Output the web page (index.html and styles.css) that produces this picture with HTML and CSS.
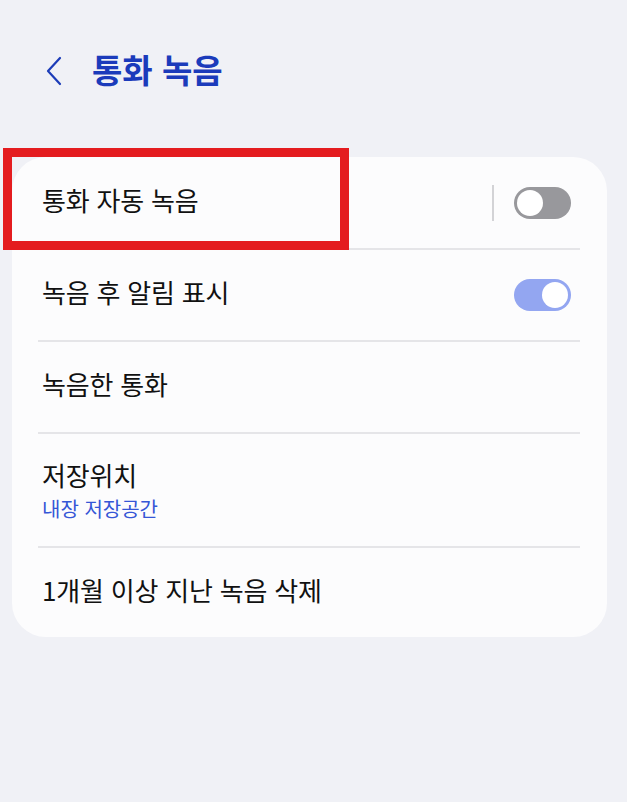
FILE: index.html
```html
<!DOCTYPE html>
<html lang="ko">
<head>
<meta charset="utf-8">
<link rel="stylesheet" href="styles.css">
</head>
<body>
<div class="page">
  <header class="header">
    <svg class="back" viewBox="0 0 18 30" width="18" height="30"><path d="M15 2 L3 15 L15 28" fill="none" stroke="#1c3cb8" stroke-width="2.2" stroke-linecap="round" stroke-linejoin="round"/></svg>
    <h1 class="title">통화 녹음</h1>
  </header>
  <section class="card">
    <div class="row r1">
      <span class="label">통화 자동 녹음</span>
      <span class="vsep"></span>
      <span class="toggle off"><span class="knob"></span></span>
    </div>
    <div class="divider"></div>
    <div class="row r2">
      <span class="label">녹음 후 알림 표시</span>
      <span class="toggle on"><span class="knob"></span></span>
    </div>
    <div class="divider"></div>
    <div class="row r3">
      <span class="label">녹음한 통화</span>
    </div>
    <div class="divider"></div>
    <div class="row r4">
      <div class="stack">
        <span class="label">저장위치</span>
        <span class="sub">내장 저장공간</span>
      </div>
    </div>
    <div class="divider"></div>
    <div class="row r5">
      <span class="label">1개월 이상 지난 녹음 삭제</span>
    </div>
  </section>
  <div class="highlight"></div>
</div>
</body>
</html>
```
FILE: styles.css
```css
html, body {
  margin: 0;
  padding: 0;
  background: #f0f1f6;
}
body {
  font-family: "Noto Sans CJK KR", "Noto Sans", sans-serif;
  width: 627px;
  height: 802px;
  overflow: hidden;
}
.page {
  position: relative;
  padding: 0 20px 0 12px;
}
.header {
  display: flex;
  align-items: center;
  height: 141px;
  padding-left: 33px;
  box-sizing: border-box;
}
.back {
  display: block;
  margin-top: 0;
}
.title {
  margin: 0 0 0 29px;
  font-size: 33px;
  line-height: 40px;
  font-weight: 700;
  color: #1b3bbb;
  letter-spacing: 0;
  position: relative;
  top: -2px;
}
.card {
  margin-top: 16px;
  background: #fcfcfd;
  border-radius: 34px;
  width: 595px;
  box-sizing: border-box;
  padding: 0 27px 0 26px;
}
.row {
  display: flex;
  align-items: center;
  padding-left: 4px;
  padding-right: 9px;
}
.r1 { height: 91px; }
.r2 { height: 90px; }
.r3 { height: 90px; }
.r4 { height: 112px; }
.r5 { height: 89px; }
.label {
  font-size: 26px;
  line-height: 34px;
  color: #111;
  flex: 1;
  letter-spacing: -0.2px;
  position: relative;
  top: -3px;
}
.stack {
  display: flex;
  flex-direction: column;
}
.stack .label {
  top: 0;
}
.sub {
  font-size: 20px;
  line-height: 26px;
  color: #3556d6;
  margin-top: 4px;
}
.divider {
  height: 2px;
  background: #e5e5e8;
}
.vsep {
  width: 2px;
  height: 36px;
  background: #d3d3d6;
  margin-right: 20px;
}
.toggle {
  width: 57px;
  height: 32px;
  border-radius: 16px;
  box-sizing: border-box;
  padding: 3px;
  display: flex;
}
.toggle .knob {
  width: 26px;
  height: 26px;
  border-radius: 50%;
  background: #fff;
}
.toggle.off {
  background: #98989c;
  justify-content: flex-start;
}
.toggle.on {
  background: #93a6f1;
  justify-content: flex-end;
}
.highlight {
  position: absolute;
  left: 3px;
  top: 148px;
  width: 346px;
  height: 102px;
  box-sizing: border-box;
  border: 9px solid #e41c1f;
}
```
